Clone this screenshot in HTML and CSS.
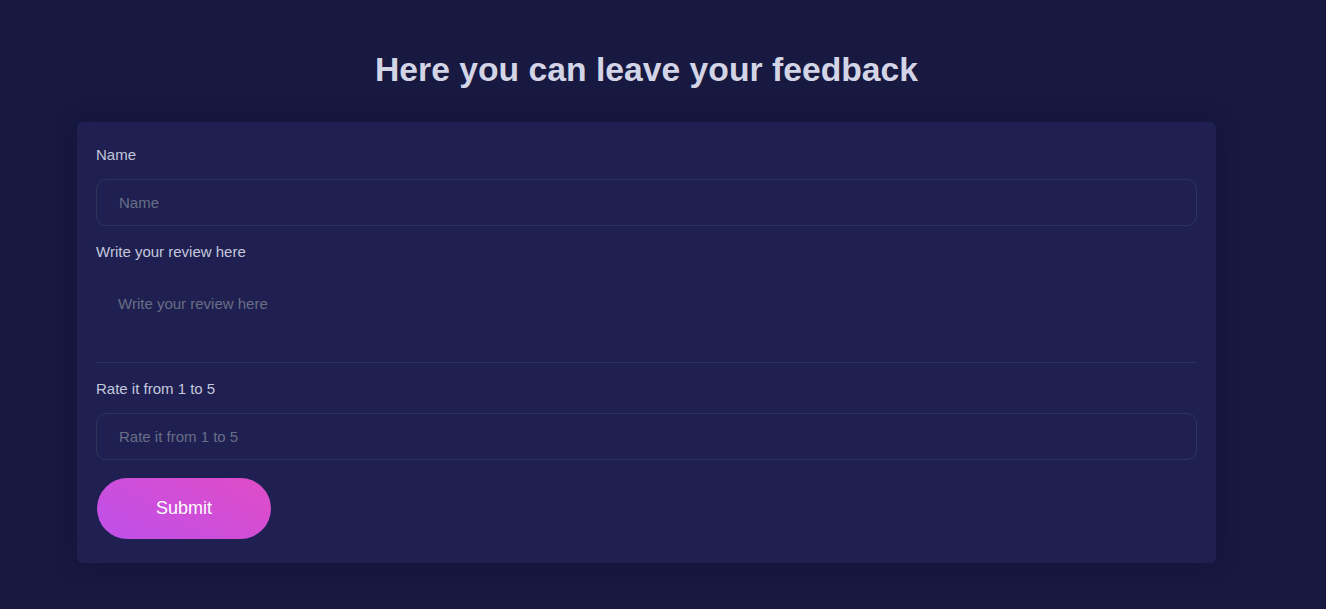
FILE: index.html
```html
<!DOCTYPE html>
<html lang="en">
<head>
<meta charset="utf-8">
<title>Feedback</title>
<link rel="stylesheet" href="styles.css">
</head>
<body>
<main class="page">
  <h1 class="title">Here you can leave your feedback</h1>
  <form class="card">
    <div class="group">
      <label class="label" for="name">Name</label>
      <input class="input" id="name" type="text" placeholder="Name">
    </div>
    <div class="group">
      <label class="label" for="review">Write your review here</label>
      <textarea class="textarea" id="review" placeholder="Write your review here"></textarea>
    </div>
    <div class="group">
      <label class="label" for="rate">Rate it from 1 to 5</label>
      <input class="input" id="rate" type="text" placeholder="Rate it from 1 to 5">
    </div>
    <button class="submit" type="button">Submit</button>
  </form>
</main>
</body>
</html>
```
FILE: styles.css
```css
html, body {
  margin: 0;
  padding: 0;
  background: #171941;
  font-family: "Liberation Sans", Arial, sans-serif;
}
.page {
  width: 1139px;
  padding: 50px 0 46px 77px;
}
.title {
  margin: 0 0 34px;
  text-align: center;
  font-size: 33.7px;
  line-height: 38px;
  font-weight: 700;
  color: #d3d5e6;
}
.card {
  background: #1f2051;
  border-radius: 6px;
  padding: 24px 19px 24px 19px;
  box-shadow: 0 0 24px rgba(10, 10, 40, 0.35);
  display: flex;
  flex-direction: column;
}
.group {
  display: flex;
  flex-direction: column;
  margin-bottom: 17px;
}
.label {
  font-size: 15px;
  line-height: 17px;
  color: #c4c7dc;
  margin-bottom: 16px;
}
.input {
  box-sizing: border-box;
  height: 47px;
  width: 100%;
  background: transparent;
  border: 1px solid #2c3559;
  border-radius: 10px;
  padding: 0 22px;
  font-family: "Liberation Sans", Arial, sans-serif;
  font-size: 15px;
  color: #c4c7dc;
  outline: none;
}
.textarea {
  box-sizing: border-box;
  height: 87px;
  width: 100%;
  background: transparent;
  border: none;
  border-bottom: 1px solid #2c3559;
  padding: 19px 22px 17px;
  font-family: "Liberation Sans", Arial, sans-serif;
  font-size: 15px;
  line-height: 17px;
  color: #c4c7dc;
  resize: none;
  outline: none;
}
.input::placeholder, .textarea::placeholder {
  color: #686e86;
}
.submit {
  align-self: flex-start;
  margin-top: 1px;
  margin-left: 1px;
  width: 174px;
  height: 61px;
  border: none;
  border-radius: 31px;
  background: linear-gradient(30deg, #bd50ea 0%, #e04cc6 100%);
  color: #ffffff;
  font-family: "Liberation Sans", Arial, sans-serif;
  font-size: 18px;
  cursor: pointer;
}
```
